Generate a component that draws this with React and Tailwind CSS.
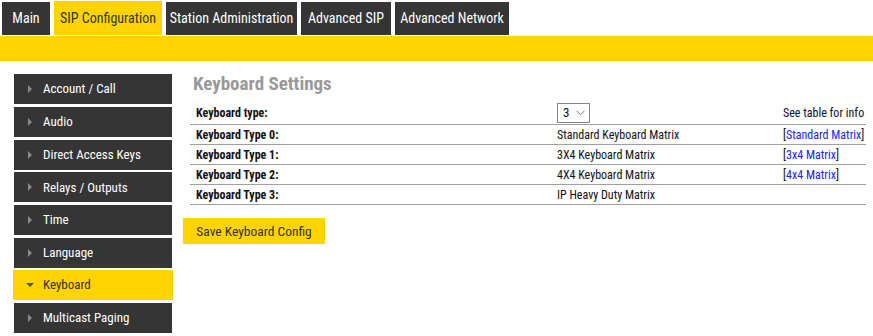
import React from "react";

const tabs = [
  { label: "Main", w: "w-[48px]" },
  { label: "SIP Configuration", w: "w-[108px]", active: true },
  { label: "Station Administration", w: "w-[131px]" },
  { label: "Advanced SIP", w: "w-[90px]" },
  { label: "Advanced Network", w: "w-[114px]" },
];

const side = [
  "Account / Call",
  "Audio",
  "Direct Access Keys",
  "Relays / Outputs",
  "Time",
  "Language",
  "Keyboard",
  "Multicast Paging",
];

const rows = [
  ["Keyboard Type 0:", "Standard Keyboard Matrix", "Standard Matrix"],
  ["Keyboard Type 1:", "3X4 Keyboard Matrix", "3x4 Matrix"],
  ["Keyboard Type 2:", "4X4 Keyboard Matrix", "4x4 Matrix"],
  ["Keyboard Type 3:", "IP Heavy Duty Matrix", null],
];

export default function App() {
  return (
    <div
      className="w-[873px] h-[336px] bg-white overflow-hidden [font-stretch:condensed]"
      style={{ fontFamily: "Roboto, 'Liberation Sans', sans-serif" }}
    >
      <div className="flex items-end gap-[4px] pl-[2px] h-[35px]">
        {tabs.map((t) =>
          t.active ? (
            <div
              key={t.label}
              className={`${t.w} h-[34px] bg-[#ffd400] text-[#333] text-[14px] flex items-center justify-center`}
            >
              {t.label}
            </div>
          ) : (
            <div
              key={t.label}
              className={`${t.w} h-[33px] bg-[#353535] text-white text-[14px] flex items-center justify-center`}
            >
              {t.label}
            </div>
          )
        )}
      </div>
      <div className="mt-[1px] h-[25px] bg-[#ffd400]" />
      <div className="flex">
        <div className="ml-[14px] mt-[13px] w-[158px] flex flex-col gap-[2.8px]">
          {side.map((s) =>
            s === "Keyboard" ? (
              <div
                key={s}
                className="-mx-[1px] -mt-[1px] h-[30px] bg-[#ffd400] text-[#333] text-[13px] flex items-center"
              >
                <span className="ml-[13px] mr-[9px] w-0 h-0 border-l-[4px] border-r-[4px] border-t-[4px] border-l-transparent border-r-transparent border-t-[#555]" />
                {s}
              </div>
            ) : (
              <div
                key={s}
                className="h-[30px] bg-[#353535] text-white text-[13px] flex items-center"
              >
                <span className="ml-[14px] mr-[11px] w-0 h-0 border-t-[4px] border-b-[4px] border-l-[4px] border-t-transparent border-b-transparent border-l-[#888]" />
                {s}
              </div>
            )
          )}
        </div>
        <div className="ml-[11px] flex-1 pr-[7px]">
          <div className="ml-[10px] mt-[12px] text-[19px] font-bold text-[#999] leading-[22px]">
            Keyboard Settings
          </div>
          <div className="ml-[7px] mt-[7px] text-[12px] text-[#111]">
            <div className="flex items-center h-[23px] border-b border-[#a0a0a0]">
              <div className="w-[367px] pl-[6px] font-bold">Keyboard type:</div>
              <div className="w-[226px]">
                <div className="w-[33px] h-[20px] border border-[#888] flex items-center pl-[5px] gap-[7px] text-[13px]">
                  3
                  <svg width="9" height="6" viewBox="0 0 9 6">
                    <path d="M0.5 0.8 L4.5 4.8 L8.5 0.8" fill="none" stroke="#777" strokeWidth="1" />
                  </svg>
                </div>
              </div>
              <div>See table for info</div>
            </div>
            {rows.map((r) => (
              <div key={r[0]} className="flex items-center h-[20px] border-b border-[#a0a0a0]">
                <div className="w-[367px] pl-[6px] font-bold">{r[0]}</div>
                <div className="w-[226px]">{r[1]}</div>
                <div>
                  {r[2] && (
                    <>
                      [<span className="text-[#2222ee]">{r[2]}</span>]
                    </>
                  )}
                </div>
              </div>
            ))}
          </div>
          <button className="mt-[13px] w-[142px] h-[26px] bg-[#ffd400] text-[#333] text-[13.5px]">
            Save Keyboard Config
          </button>
        </div>
      </div>
    </div>
  );
}
